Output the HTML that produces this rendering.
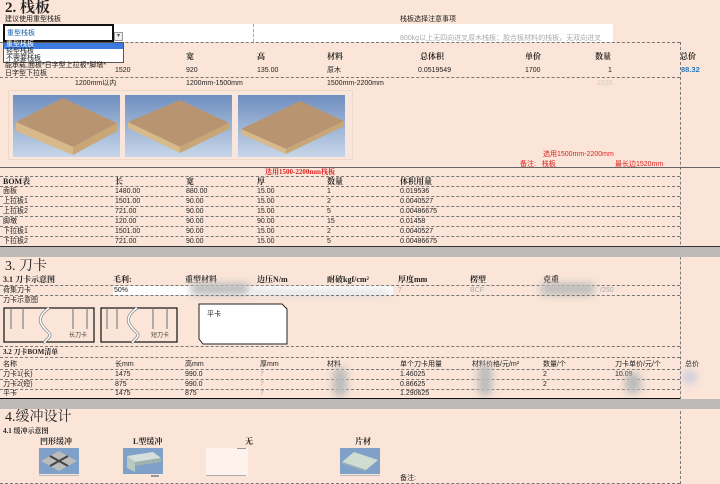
<!DOCTYPE html>
<html><head><meta charset="utf-8"><style>
*{margin:0;padding:0;box-sizing:border-box}
body{width:720px;height:484px;overflow:hidden;background:#fbe5d8;position:relative;font-family:"Liberation Sans","Noto Sans CJK SC",sans-serif;color:#222}
.t{position:absolute;font-size:7px;line-height:9px;white-space:nowrap}
.b{font-weight:bold;font-family:"Liberation Serif","Noto Serif CJK SC",serif;font-size:8px}
.h{position:absolute;left:0;width:680px;border-top:1px dashed #777}
.gb{position:absolute;left:0;width:720px;background:#bdbab8}
.r{color:#d22}
.blur{position:absolute;background:#bbb;filter:blur(4px);border-radius:8px}
.pal{position:absolute;top:95px;width:107px;height:62px}
</style></head><body>
<div class="t" style="left:5px;top:0;font-size:15px;line-height:16px;font-weight:bold;font-family:'Liberation Serif','Noto Serif CJK SC',serif">2. 栈板</div>
<div class="t" style="left:5px;top:15px">建议使用重型栈板</div>
<div class="t" style="left:400px;top:15px">栈板选择注意事项</div>
<div style="position:absolute;left:0;top:24px;width:253px;height:18px;background:#fff"></div>
<div style="position:absolute;left:253px;top:24px;width:1px;height:18px;border-left:1px dashed #aaa"></div>
<div style="position:absolute;left:254px;top:24px;width:359px;height:18px;background:#fff"></div>
<div class="t" style="left:400px;top:34px;color:#aaa">800kg以上无四向进叉原木栈板；胶合板材料的栈板，无双向进叉</div>
<div class="h" style="top:42px"></div>
<div style="position:absolute;left:3px;top:24px;width:111px;height:18px;border:2px solid #111;background:#fff"></div>
<div class="t" style="left:7px;top:29px;color:#1a5fa8">重型栈板</div>
<div style="position:absolute;left:114px;top:32px;width:9px;height:9px;border:1px solid #999;background:#eee;font-size:6px;text-align:center;line-height:7px;color:#555">▾</div>
<div style="position:absolute;left:3px;top:42px;width:121px;height:21px;border:1px solid #555;background:#fff"></div>
<div style="position:absolute;left:4px;top:43px;width:119px;height:6px;background:#3b7be0"></div>
<div class="t" style="left:6px;top:41px;color:#fff;line-height:8px">重型栈板</div>
<div class="t" style="left:6px;top:48px;line-height:7px">轻型栈板</div>
<div class="t" style="left:6px;top:55px;line-height:7px">不需要栈板</div>
<div class="t b" style="left:186px;top:52px">宽</div>
<div class="t b" style="left:257px;top:52px">高</div>
<div class="t b" style="left:327px;top:52px">材料</div>
<div class="t b" style="left:420px;top:52px">总体积</div>
<div class="t b" style="left:525px;top:52px">单价</div>
<div class="t b" style="left:595px;top:52px">数量</div>
<div class="t b" style="left:680px;top:52px">总价</div>
<div class="t" style="left:5px;top:62px;line-height:8px">能承载,面板*日字型上拉板*脚墩*<br>日字型下拉板</div>
<div class="t" style="left:115px;top:66px">1520</div>
<div class="t" style="left:186px;top:66px">920</div>
<div class="t" style="left:257px;top:66px">135.00</div>
<div class="t" style="left:327px;top:66px">原木</div>
<div class="t" style="left:418px;top:66px">0.0519549</div>
<div class="t" style="left:525px;top:66px">1700</div>
<div class="t" style="left:608px;top:66px">1</div>
<div class="t" style="left:681px;top:65px;color:#2a7bc4;font-weight:bold;font-size:7.5px">88.32</div>
<div class="h" style="top:77px"></div>
<div style="position:absolute;left:680px;top:42px;height:442px;border-left:1px dashed #777"></div>
<div class="t" style="left:75px;top:79px">1200mm以内</div>
<div class="t" style="left:186px;top:79px">1200mm-1500mm</div>
<div class="t" style="left:327px;top:79px">1500mm-2200mm</div>
<div class="t" style="left:597px;top:79px;color:#ccc">1520</div>
<div style="position:absolute;left:8px;top:90px;width:345px;height:70px;background:#f8e6dc;border:1px solid #f0d8c8"></div>
<svg class="pal" style="left:13px" viewBox="0 0 107 62"><defs><linearGradient id="g" x1="0" y1="0" x2="0" y2="1"><stop offset="0" stop-color="#6f8fc0"/><stop offset="1" stop-color="#c7d6e8"/></linearGradient></defs><rect width="107" height="62" fill="url(#g)"/><polygon points="50,3 104,28 60,52 3,27" fill="#b99470"/><polygon points="3,27 60,52 60,60 3,36" fill="#d8b98a"/><polygon points="60,52 104,28 104,36 60,60" fill="#c9a676"/></svg>
<svg class="pal" style="left:125px" viewBox="0 0 107 62"><rect width="107" height="62" fill="url(#g)"/><polygon points="55,5 104,28 55,52 3,27" fill="#b99470"/><polygon points="3,27 55,52 55,58 3,33" fill="#d8b98a"/><polygon points="55,52 104,28 104,34 55,58" fill="#c9a676"/></svg>
<svg class="pal" style="left:238px" viewBox="0 0 107 62"><rect width="107" height="62" fill="url(#g)"/><polygon points="62,6 106,26 48,54 3,34" fill="#b99470"/><polygon points="3,34 48,54 48,59 3,39" fill="#d8b98a"/><polygon points="48,54 106,26 106,31 48,59" fill="#c9a676"/></svg>
<div class="t r" style="left:543px;top:150px">选用1500mm-2200mm</div>
<div class="t r" style="left:520px;top:160px">备注:&nbsp;&nbsp;&nbsp;栈板</div>
<div class="t r" style="left:615px;top:160px">最长边1520mm</div>
<div style="position:absolute;left:0;top:167px;width:720px;border-top:1px solid #666"></div>
<div class="t r b" style="left:265px;top:168px;font-size:7px">选用1500-2200mm栈板</div>
<div class="h" style="top:176px"></div>
<div class="t b" style="left:3px;top:177px">BOM表</div><div class="t b" style="left:115px;top:177px">长</div><div class="t b" style="left:186px;top:177px">宽</div><div class="t b" style="left:257px;top:177px">厚</div><div class="t b" style="left:327px;top:177px">数量</div><div class="t b" style="left:400px;top:177px">体积用量</div>
<div class="h" style="top:186px"></div>
<div class="t" style="left:3px;top:187px">面板</div><div class="t" style="left:115px;top:187px">1480.00</div><div class="t" style="left:186px;top:187px">880.00</div><div class="t" style="left:257px;top:187px">15.00</div><div class="t" style="left:327px;top:187px">1</div><div class="t" style="left:400px;top:187px">0.019536</div>
<div class="h" style="top:196px"></div>
<div class="t" style="left:3px;top:197px">上拉板1</div><div class="t" style="left:115px;top:197px">1501.00</div><div class="t" style="left:186px;top:197px">90.00</div><div class="t" style="left:257px;top:197px">15.00</div><div class="t" style="left:327px;top:197px">2</div><div class="t" style="left:400px;top:197px">0.0040527</div>
<div class="h" style="top:206px"></div>
<div class="t" style="left:3px;top:207px">上拉板2</div><div class="t" style="left:115px;top:207px">721.00</div><div class="t" style="left:186px;top:207px">90.00</div><div class="t" style="left:257px;top:207px">15.00</div><div class="t" style="left:327px;top:207px">5</div><div class="t" style="left:400px;top:207px">0.00486675</div>
<div class="h" style="top:216px"></div>
<div class="t" style="left:3px;top:217px">脚墩</div><div class="t" style="left:115px;top:217px">120.00</div><div class="t" style="left:186px;top:217px">90.00</div><div class="t" style="left:257px;top:217px">90.00</div><div class="t" style="left:327px;top:217px">15</div><div class="t" style="left:400px;top:217px">0.01458</div>
<div class="h" style="top:226px"></div>
<div class="t" style="left:3px;top:227px">下拉板1</div><div class="t" style="left:115px;top:227px">1501.00</div><div class="t" style="left:186px;top:227px">90.00</div><div class="t" style="left:257px;top:227px">15.00</div><div class="t" style="left:327px;top:227px">2</div><div class="t" style="left:400px;top:227px">0.0040527</div>
<div class="h" style="top:236px"></div>
<div class="t" style="left:3px;top:237px">下拉板2</div><div class="t" style="left:115px;top:237px">721.00</div><div class="t" style="left:186px;top:237px">90.00</div><div class="t" style="left:257px;top:237px">15.00</div><div class="t" style="left:327px;top:237px">5</div><div class="t" style="left:400px;top:237px">0.00486675</div>
<div style="position:absolute;left:0;top:246px;width:720px;border-top:1px solid #333"></div>
<div class="gb" style="top:247px;height:10px"></div>
<div class="t" style="left:5px;top:259px;font-size:14px;line-height:15px;font-family:'Liberation Serif','Noto Serif CJK SC',serif">3. 刀卡</div>
<div class="t b" style="left:3px;top:275px">3.1 刀卡示意图</div><div class="t b" style="left:113px;top:275px">毛利:</div><div class="t b" style="left:185px;top:275px">重型材料</div><div class="t b" style="left:257px;top:275px">边压N/m</div><div class="t b" style="left:327px;top:275px">耐破kgf/cm²</div><div class="t b" style="left:398px;top:275px">厚度mm</div><div class="t b" style="left:470px;top:275px">楞型</div><div class="t b" style="left:543px;top:275px">克重</div>
<div class="h" style="top:285px"></div>
<div style="position:absolute;left:113px;top:286px;width:280px;height:9px;background:#fff"></div>
<div class="t" style="left:3px;top:286px">荷集刀卡</div><div class="t" style="left:114px;top:286px">50%</div><div class="t" style="left:398px;top:286px;color:#aaa">7</div><div class="t" style="left:470px;top:286px;color:#aaa">BCF</div><div class="t" style="left:600px;top:286px;color:#aaa">/250</div>
<div class="blur" style="left:190px;top:283px;width:60px;height:12px"></div>
<div class="blur" style="left:250px;top:290px;width:140px;height:6px;background:#ddd"></div>
<div class="blur" style="left:540px;top:283px;width:55px;height:12px"></div>
<div class="h" style="top:295px"></div>
<div class="t" style="left:3px;top:296px">刀卡示意图</div>
<svg style="position:absolute;left:3px;top:307px" width="175" height="37"><g fill="none" stroke="#111" stroke-width="1.2"><rect x="1" y="1" width="90" height="34"/><rect x="70" y="1" width="104" height="34" stroke="none"/><rect x="98" y="1" width="76" height="34"/></g><g stroke="#999" stroke-width="1.5"><line x1="8" y1="2" x2="8" y2="22"/><line x1="20" y1="2" x2="20" y2="22"/><line x1="70" y1="2" x2="70" y2="22"/><line x1="84" y1="2" x2="84" y2="22"/><line x1="104" y1="2" x2="104" y2="22"/><line x1="114" y1="2" x2="114" y2="22"/><line x1="150" y1="2" x2="150" y2="22"/><line x1="164" y1="2" x2="164" y2="22"/></g><path d="M46 1 C30 12 40 20 46 26 C50 30 40 34 42 36" stroke="#888" stroke-width="3" fill="none"/><path d="M46 1 C30 12 40 20 46 26 C50 30 40 34 42 36" stroke="#fff" stroke-width="1.5" fill="none"/><path d="M134 1 C118 12 128 20 134 26 C138 30 128 34 130 36" stroke="#888" stroke-width="3" fill="none"/><path d="M134 1 C118 12 128 20 134 26 C138 30 128 34 130 36" stroke="#fff" stroke-width="1.5" fill="none"/><text x="66" y="30" font-size="6" fill="#444">长刀卡</text><text x="148" y="30" font-size="6" fill="#444">短刀卡</text></svg>
<svg style="position:absolute;left:198px;top:303px" width="90" height="42"><path d="M1 1 H84 L89 6 V41 H5 L1 36 Z" fill="#fff" stroke="#222"/><text x="9" y="13" font-size="7" fill="#222">平卡</text></svg>
<div class="h" style="top:346px"></div>
<div class="t b" style="left:3px;top:348px;font-size:7px">3.2 刀卡BOM清单</div>
<div class="h" style="top:357px"></div>
<div class="t" style="left:3px;top:360px">名称</div><div class="t" style="left:115px;top:360px">长mm</div><div class="t" style="left:185px;top:360px">高mm</div><div class="t" style="left:260px;top:360px">厚mm</div><div class="t" style="left:327px;top:360px">材料</div><div class="t" style="left:400px;top:360px">单个刀卡用量</div><div class="t" style="left:472px;top:360px">材料价格/元/m²</div><div class="t" style="left:543px;top:360px">数量/个</div><div class="t" style="left:615px;top:360px">刀卡单价/元/个</div><div class="t" style="left:685px;top:360px">总价</div>
<div class="h" style="top:369px"></div>
<div class="t" style="left:3px;top:370px">刀卡1(长)</div><div class="t" style="left:115px;top:370px">1475</div><div class="t" style="left:185px;top:370px">990.0</div><div class="t" style="left:260px;top:370px;color:#aaa">7</div><div class="t" style="left:400px;top:370px">1.46025</div><div class="t" style="left:543px;top:370px">2</div><div class="t" style="left:615px;top:370px">10.09</div>
<div class="h" style="top:379px"></div>
<div class="t" style="left:3px;top:380px">刀卡2(短)</div><div class="t" style="left:115px;top:380px">875</div><div class="t" style="left:185px;top:380px">990.0</div><div class="t" style="left:260px;top:380px;color:#aaa">7</div><div class="t" style="left:400px;top:380px">0.86625</div><div class="t" style="left:543px;top:380px">2</div>
<div class="h" style="top:389px"></div>
<div class="t" style="left:3px;top:389px">平卡</div><div class="t" style="left:115px;top:389px">1475</div><div class="t" style="left:185px;top:389px">875</div><div class="t" style="left:260px;top:389px;color:#aaa">7</div><div class="t" style="left:400px;top:389px">1.290625</div>
<div class="blur" style="left:333px;top:367px;width:14px;height:30px"></div>
<div class="blur" style="left:478px;top:364px;width:14px;height:32px"></div>
<div class="blur" style="left:625px;top:372px;width:16px;height:22px"></div>
<div class="blur" style="left:683px;top:370px;width:14px;height:14px;background:#ccd"></div>
<div style="position:absolute;left:0;top:398px;width:680px;border-top:1px solid #111"></div>
<div class="gb" style="top:399px;height:10px"></div>
<div class="t" style="left:5px;top:410px;font-size:14px;line-height:16px;font-family:'Liberation Serif','Noto Serif CJK SC',serif">4.缓冲设计</div>
<div class="t b" style="left:3px;top:427px;font-size:7px">4.1 缓冲示意图</div>
<div class="t b" style="left:40px;top:437px">凹形缓冲</div><div class="t b" style="left:133px;top:437px">L型缓冲</div><div class="t b" style="left:245px;top:437px">无</div><div class="t b" style="left:355px;top:437px">片材</div>
<svg style="position:absolute;left:39px;top:448px" width="40" height="30"><rect width="40" height="26" fill="#7fa0c8"/><polygon points="20,3 38,13 20,23 2,13" fill="#bbb"/><path d="M11 8 L29 18 M29 8 L11 18" stroke="#444" stroke-width="2"/><rect y="27" width="40" height="1" fill="#bbb"/></svg>
<svg style="position:absolute;left:123px;top:448px" width="40" height="30"><rect width="40" height="26" fill="#7fa0c8"/><polygon points="4,8 30,4 38,10 12,14" fill="#d5e0dd"/><polygon points="4,8 12,14 12,24 4,20" fill="#b8c8c2"/><polygon points="12,14 38,10 38,14 12,18" fill="#9fb3ae"/><rect x="28" y="27" width="8" height="2" fill="#999"/></svg>
<svg style="position:absolute;left:206px;top:448px" width="42" height="30"><rect x="0" y="0" width="42" height="28" fill="#fff" opacity=".5"/><rect x="31" y="0" width="9" height="1" fill="#999"/><rect y="27" width="40" height="1" fill="#aaa"/></svg>
<svg style="position:absolute;left:340px;top:448px" width="40" height="30"><rect width="40" height="26" fill="#7fa0c8"/><polygon points="14,4 38,12 26,22 2,14" fill="#cfddd0"/><polygon points="2,14 26,22 26,24 2,16" fill="#9ab"/><rect y="27" width="40" height="1" fill="#bbb"/></svg>
<div class="t" style="left:400px;top:474px">备注:</div>
<div class="h" style="top:483px"></div>
</body></html>
